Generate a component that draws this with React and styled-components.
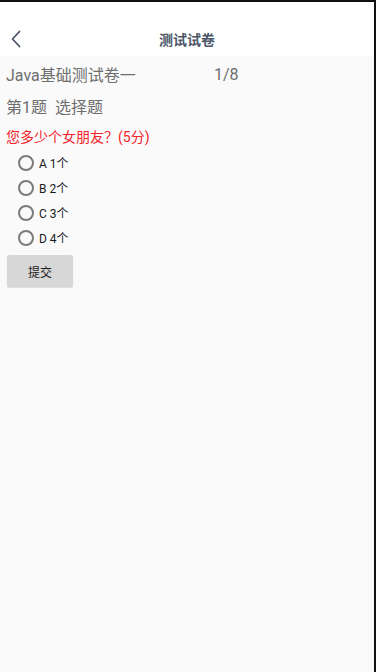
import React from 'react';
import styled, { createGlobalStyle } from 'styled-components';

const GlobalStyle = createGlobalStyle`
  html, body {
    margin: 0;
    padding: 0;
    background: #fafafa;
  }
  body {
    font-family: Roboto, "Noto Sans CJK SC", sans-serif;
  }
`;

const Screen = styled.div`
  min-height: 672px;
  background: #fafafa;
  border-right: 2px solid #111;
  box-sizing: border-box;
  display: flex;
  flex-direction: column;
`;

const StatusStrip = styled.div`
  height: 2px;
  background: #111;
`;

const Header = styled.header`
  height: 34px;
  padding-top: 20px;
  background: #fff;
  display: grid;
  grid-template-columns: 44px 1fr 44px;
  align-items: center;
`;

const BackButton = styled.button`
  border: 0;
  background: none;
  padding: 0 0 0 11px;
  height: 34px;
  display: flex;
  align-items: center;
  cursor: pointer;
`;

const Title = styled.h1`
  margin: 0;
  text-align: center;
  font-size: 14px;
  font-weight: 700;
  color: #4b5567;
  font-family: "Noto Sans CJK SC", sans-serif;
`;

const Content = styled.main`
  padding: 2px 0 0 6px;
  display: flex;
  flex-direction: column;
`;

const InfoRow = styled.div`
  display: flex;
  height: 32px;
  align-items: center;
  font-size: 16px;
  color: #6e6e6e;
`;

const PaperName = styled.span`
  width: 208px;
`;

const QuestionHead = styled.div`
  height: 32px;
  display: flex;
  align-items: center;
  font-size: 16px;
  color: #6e6e6e;
  white-space: pre;
`;

const QuestionText = styled.div`
  height: 28px;
  display: flex;
  align-items: center;
  font-size: 14px;
  color: #f2232b;
`;

const Options = styled.div`
  display: flex;
  flex-direction: column;
  padding-left: 12px;
`;

const Option = styled.label`
  height: 25px;
  display: flex;
  align-items: center;
  gap: 5px;
  font-size: 12px;
  color: #1a1a1a;
  cursor: pointer;
`;

const Radio = styled.span`
  width: 16px;
  height: 16px;
  box-sizing: border-box;
  border-radius: 50%;
  border: 2px solid #7b7b7b;
  background: ${(p) => (p.$checked ? 'radial-gradient(#7b7b7b 3px, transparent 4px)' : 'transparent')};
`;

const SubmitButton = styled.button`
  margin: 5px 0 0 1px;
  width: 66px;
  height: 32px;
  border: 0;
  border-radius: 2px;
  background: #d7d7d7;
  box-shadow: 0 1px 1px rgba(0, 0, 0, 0.12);
  font-size: 12px;
  color: #222;
  font-family: "Noto Sans CJK SC", sans-serif;
`;

const options = ['A 1个', 'B 2个', 'C 3个', 'D 4个'];

const App = () => {
  const [picked, setPicked] = React.useState(null);

  return (
    <>
      <GlobalStyle />
      <Screen>
        <StatusStrip />
        <Header>
          <BackButton aria-label="返回">
            <svg width="10" height="18" viewBox="0 0 10 18" fill="none">
              <path d="M8.5 1.5L1.5 9l7 7.5" stroke="#4b5567" strokeWidth="1.8" strokeLinecap="round" strokeLinejoin="round" />
            </svg>
          </BackButton>
          <Title>测试试卷</Title>
          <span />
        </Header>
        <Content>
          <InfoRow>
            <PaperName>Java基础测试卷一</PaperName>
            <span>1/8</span>
          </InfoRow>
          <QuestionHead>第1题  选择题</QuestionHead>
          <QuestionText>您多少个女朋友？(5分)</QuestionText>
          <Options>
            {options.map((o, i) => (
              <Option key={o} onClick={() => setPicked(i)}>
                <Radio $checked={picked === i} />
                {o}
              </Option>
            ))}
          </Options>
          <SubmitButton>提交</SubmitButton>
        </Content>
      </Screen>
    </>
  );
};

export default App;
